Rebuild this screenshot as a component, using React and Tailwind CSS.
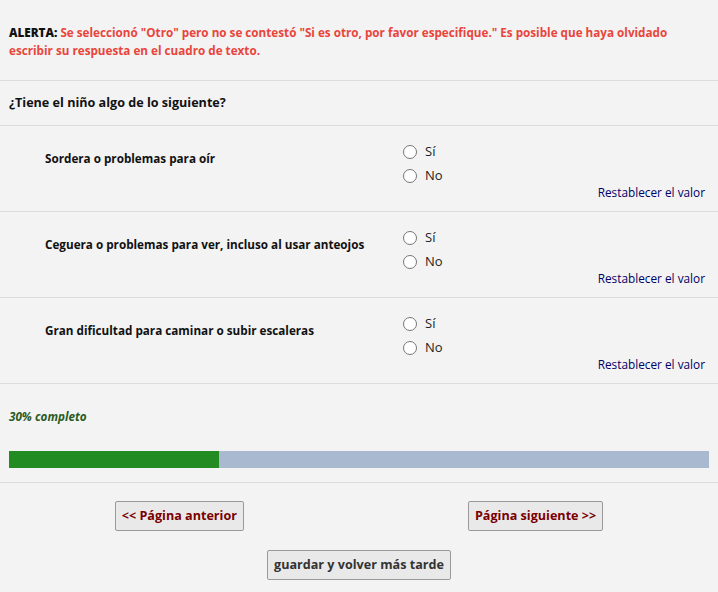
import React, { useState } from 'react';

const questions = [
  'Sordera o problemas para oír',
  'Ceguera o problemas para ver, incluso al usar anteojos',
  'Gran dificultad para caminar o subir escaleras',
];

function Radio({ label, checked, onClick }) {
  return (
    <label
      onClick={onClick}
      className="flex items-center h-6 cursor-pointer text-[13px] text-[#222]"
    >
      <span className="w-[14px] h-[14px] rounded-full border border-[#767676] bg-white flex items-center justify-center mr-[8px]">
        {checked && <span className="w-[8px] h-[8px] rounded-full bg-[#1a73e8]" />}
      </span>
      {label}
    </label>
  );
}

function QuestionRow({ text }) {
  const [value, setValue] = useState('');
  return (
    <div className="flex border-b border-[#dcdcdc]">
      <div className="w-[403px] pl-[45px] pt-[23px] text-[11.7px] leading-[18px] font-bold text-[#111]">
        {text}
      </div>
      <div className="flex-1 pt-[14px] pb-[11px]">
        <Radio label="Sí" checked={value === 'si'} onClick={() => setValue('si')} />
        <Radio label="No" checked={value === 'no'} onClick={() => setValue('no')} />
        <div className="-mt-1 pr-[13px] text-right text-[11.8px] leading-4 text-[#000066] cursor-pointer" onClick={() => setValue('')}>
          Restablecer el valor
        </div>
      </div>
    </div>
  );
}

export default function App() {
  return (
    <main
      className="min-h-[592px] bg-[#f3f3f3] text-[#111]"
      style={{ fontFamily: '"Open Sans", "Noto Sans", sans-serif' }}
    >
      <div className="px-[9px] pt-[23px] pb-[21px] border-b border-[#dcdcdc] text-[11.7px] leading-[18px] font-bold text-[#e8453c]">
        <b className="text-[#111]">ALERTA:</b> Se seleccionó "Otro" pero no se contestó "Si es otro, por favor especifique." Es posible que haya olvidado escribir su respuesta en el cuadro de texto.
      </div>

      <div className="px-[9px] h-[45px] flex items-center border-b border-[#dcdcdc] text-[12.6px] font-bold">
        ¿Tiene el niño algo de lo siguiente?
      </div>

      {questions.map((q) => (
        <QuestionRow key={q} text={q} />
      ))}

      <div className="px-[9px] pt-[24px] pb-[14px] border-b border-[#dcdcdc]">
        <div className="text-[11.7px] leading-4 font-bold italic text-[#2a5a1e]">30% completo</div>
        <div className="mt-[27px] h-[17px] bg-[#a9b9cf] flex">
          <div className="w-[30%] bg-[#228b22]" />
        </div>
      </div>

      <div className="pt-[18px] pb-[12px]">
        <div className="flex justify-center gap-[224px]">
          <button className="h-[30px] px-[6px] bg-[#e9e9e9] border border-[#999] rounded-[2px] text-[12.6px] font-bold text-[#7a0000]">
            &lt;&lt; Página anterior
          </button>
          <button className="h-[30px] px-[6px] bg-[#e9e9e9] border border-[#999] rounded-[2px] text-[12.6px] font-bold text-[#7a0000]">
            Página siguiente &gt;&gt;
          </button>
        </div>
        <div className="flex justify-center mt-[19px]">
          <button className="h-[30px] px-[6px] bg-[#e9e9e9] border border-[#999] rounded-[2px] text-[12.6px] font-bold text-[#333]">
            guardar y volver más tarde
          </button>
        </div>
      </div>
    </main>
  );
}
